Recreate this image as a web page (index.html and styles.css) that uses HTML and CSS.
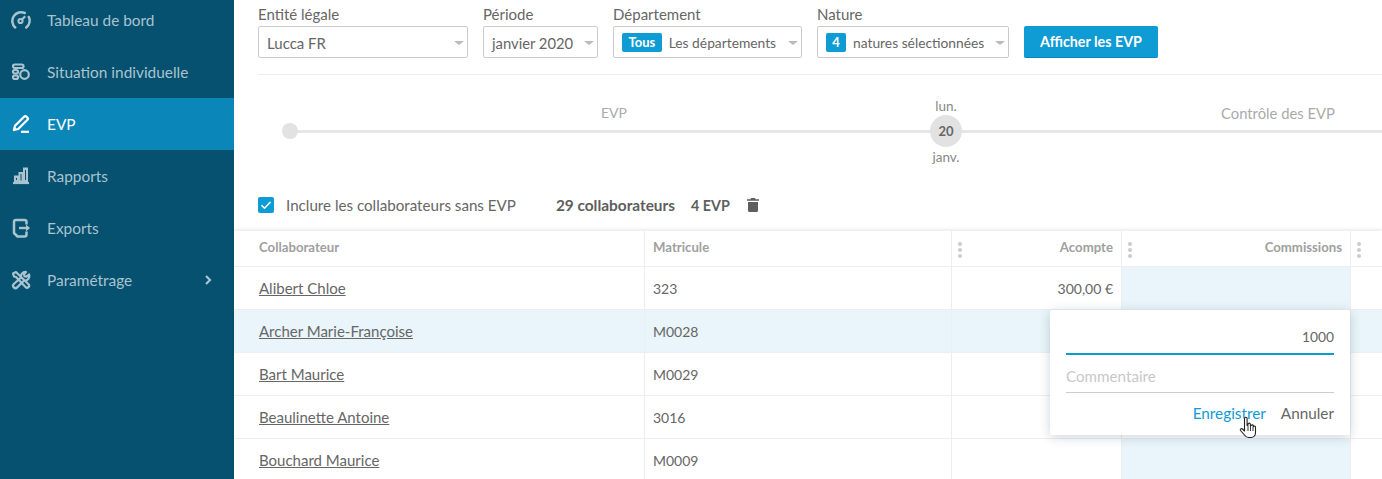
FILE: index.html
```html
<!DOCTYPE html>
<html lang="fr">
<head>
<meta charset="utf-8">
<title>EVP</title>
<link rel="stylesheet" href="styles.css">
</head>
<body>
<div class="app">
  <nav class="sidebar">
    <a class="nav-item"><svg class="nav-icon" viewBox="0 0 20 20"><path d="M4.200 17.500a8.800 8.800 0 0 1 9.600-14.500M17.800 7a8.800 8.800 0 0 1-2.500 10.500" fill="none" stroke="currentColor" stroke-width="2.500" stroke-linecap="round"/><circle cx="9.500" cy="11" r="2.100" fill="none" stroke="currentColor" stroke-width="2"/><path d="M11 9.500l3.200-3.200" stroke="currentColor" stroke-width="2.200"/></svg><span>Tableau de bord</span></a>
    <a class="nav-item"><svg class="nav-icon" viewBox="0 0 20 20"><g fill="none" stroke="currentColor" stroke-width="2.200"><rect x="2" y="2.500" width="10.500" height="3.500" rx="1.750"/><rect x="2" y="8" width="5" height="3.500" rx="1.750"/><rect x="2" y="13.500" width="5" height="3.500" rx="1.750"/><circle cx="13.500" cy="12.500" r="4.300"/></g></svg><span>Situation individuelle</span></a>
    <a class="nav-item active"><svg class="nav-icon" viewBox="0 0 20 20"><path d="M3 16l1-4.200L13.300 2.500a1.400 1.400 0 0 1 2 0l1.200 1.200a1.400 1.400 0 0 1 0 2L7.200 15z" fill="none" stroke="currentColor" stroke-width="2.300" stroke-linejoin="round"/><path d="M10 17.800h8" stroke="currentColor" stroke-width="2.200"/></svg><span>EVP</span></a>
    <a class="nav-item"><svg class="nav-icon" viewBox="0 0 20 20"><path d="M2 17h16" stroke="currentColor" stroke-width="2.200"/><g fill="none" stroke="currentColor" stroke-width="2"><rect x="4" y="10.500" width="3" height="5"/><rect x="8.500" y="7" width="3" height="8.500"/><rect x="13" y="2.500" width="3" height="13"/></g></svg><span>Rapports</span></a>
    <a class="nav-item"><svg class="nav-icon" viewBox="0 0 20 20"><path d="M15.500 6.500V4a2 2 0 0 0-2-2H5a2 2 0 0 0-2 2v11l3.500 3.500h7a2 2 0 0 0 2-2v-3" fill="none" stroke="currentColor" stroke-width="2.500" stroke-linejoin="round"/><path d="M8 10h9" stroke="currentColor" stroke-width="2.400"/><path d="M15 6.500l4 3.500-4 3.500z" fill="currentColor"/></svg><span>Exports</span></a>
    <a class="nav-item"><svg class="nav-icon" viewBox="0 0 20 20"><path d="M5 2l-3 1.500 1 3 2 .5 9.500 10a2 2 0 0 0 3-2.800L7 4zM18 4.500l-2.500 2.200-2-.5-.5-2L15 2a4.500 4.500 0 0 0-5 5.500L2.800 14a2.400 2.400 0 0 0 3.400 3.400L13 10.500a4.500 4.500 0 0 0 5-6z" fill="none" stroke="currentColor" stroke-width="2.200" stroke-linejoin="round"/></svg><span class="nav-label">Paramétrage</span><svg class="nav-chevron" viewBox="0 0 8 10"><path d="M2 1l4 4-4 4" fill="none" stroke="currentColor" stroke-width="2.200"/></svg></a>
  </nav>
  <main class="main">
    <form class="filters">
      <div class="field">
        <label class="field-label">Entité légale</label>
        <div class="select select-entity"><span class="select-text">Lucca FR</span><i class="caret"></i></div>
      </div>
      <div class="field">
        <label class="field-label">Période</label>
        <div class="select select-period"><span class="select-text select-date">janvier 2020</span><i class="caret"></i></div>
      </div>
      <div class="field">
        <label class="field-label">Département</label>
        <div class="select select-dept"><span class="tag">Tous</span><span class="select-small">Les départements</span><i class="caret"></i></div>
      </div>
      <div class="field">
        <label class="field-label">Nature</label>
        <div class="select select-nature"><span class="tag tag-num">4</span><span class="select-small">natures sélectionnées</span><i class="caret"></i></div>
      </div>
      <button class="btn" type="button">Afficher les EVP</button>
    </form>
    <section class="timeline">
      <div class="track">
        <span class="track-start"></span>
        <div class="phase phase-evp">EVP</div>
        <div class="milestone"><span class="ms-text">lun.</span><span class="ms-day">20</span><span class="ms-text">janv.</span></div>
        <div class="phase phase-ctrl">Contrôle des EVP</div>
      </div>
    </section>
    <div class="toolbar">
      <span class="checkbox"><svg viewBox="0 0 16 16"><path d="M3.500 8.200l3 3 6-6.200" fill="none" stroke="#fff" stroke-width="1.600"/></svg></span>
      <span class="check-label">Inclure les collaborateurs sans EVP</span>
      <strong class="count count-people">29 collaborateurs</strong>
      <strong class="count">4 EVP</strong>
      <svg class="trash" viewBox="0 0 12 14"><path d="M4 0h4l.6 1.200H12v1.600H0V1.200h3.400zM1 4h10v8.500A1.500 1.500 0 0 1 9.500 14h-7A1.500 1.500 0 0 1 1 12.500z" fill="#5e5e5e"/></svg>
    </div>
    <table class="grid">
      <colgroup><col class="c1"><col class="c2"><col class="c3"><col class="c4"><col class="c5"></colgroup>
      <thead>
        <tr>
          <th class="first">Collaborateur</th>
          <th>Matricule</th>
          <th class="num"><i class="dots"></i>Acompte</th>
          <th class="num"><i class="dots"></i>Commissions</th>
          <th><i class="dots"></i></th>
        </tr>
      </thead>
      <tbody>
        <tr><td class="first"><a class="person">Alibert Chloe</a></td><td class="code">323</td><td class="num code">300,00 €</td><td class="hl"></td><td></td></tr>
        <tr class="row-hl"><td class="first"><a class="person">Archer Marie-Françoise</a></td><td class="code">M0028</td><td></td><td></td><td></td></tr>
        <tr><td class="first"><a class="person">Bart Maurice</a></td><td class="code">M0029</td><td></td><td></td><td></td></tr>
        <tr><td class="first"><a class="person">Beaulinette Antoine</a></td><td class="code">3016</td><td></td><td></td><td></td></tr>
        <tr><td class="first"><a class="person">Bouchard Maurice</a></td><td class="code">M0009</td><td></td><td class="hl"></td><td></td></tr>
      </tbody>
    </table>
    <div class="popover">
      <div class="pop-input pop-value">1000</div>
      <div class="pop-input pop-comment">Commentaire</div>
      <div class="pop-actions"><a class="pop-save">Enregistrer</a><a class="pop-cancel">Annuler</a></div>
    </div>
    <svg class="cursor" viewBox="0 0 18 24"><path d="M5.500 2.500a1.300 1.300 0 0 1 2.600 0v7l.9-.3v-1a1.200 1.200 0 0 1 2.400.2v1.100l.9 0a1.100 1.100 0 0 1 2.100.5l0 .7a1.100 1.100 0 0 1 2.100.5v5.300c0 2.500-1.500 5-4.500 5H9.500c-2 0-3-1-4-2.500L1.500 14.500c-.8-1.200.8-2.500 2-1.500l2 2z" fill="#fff" stroke="#222" stroke-width="1.100" stroke-linejoin="round"/><path d="M9 10v5M11.500 10v5M14 10.500V15" stroke="#222" stroke-width=".9"/></svg>
  </main>
</div>
</body>
</html>
```
FILE: styles.css
```css
* { box-sizing: border-box; }
html, body { margin: 0; height: 479px; overflow: hidden; background: #fff; }
body { font-family: "Lato", "Open Sans", sans-serif; font-size: 15px; color: #666; }
.app { display: flex; height: 479px; overflow: hidden; }

.sidebar { flex: 0 0 234px; background: #05516f; color: #a9c3cf; font-size: 15.400px; }
.nav-item { display: flex; align-items: center; height: 52px; padding-left: 11px; }
.nav-item:first-child { height: 46px; }
.nav-item:first-child .nav-icon, .nav-item:first-child span { position: relative; top: -3px; }
.nav-item.active { background: #0b86b8; color: #fff; }
.nav-icon { width: 20px; height: 20px; margin-right: 16px; flex: none; }
.nav-label { flex: 1; }
.nav-chevron { width: 8px; height: 10px; margin-right: 22px; }

.main { flex: 1; min-width: 0; position: relative; }

.filters { display: flex; align-items: flex-end; gap: 15px; margin-left: 24px; height: 75px; padding-bottom: 16px; border-bottom: 1px solid #eee; }
.field { display: flex; flex-direction: column; }
.field-label { font-size: 15px; line-height: 18px; margin-bottom: 3px; color: #666; }
.select { display: flex; align-items: center; height: 32px; border: 1px solid #ccc; border-radius: 2px; position: relative; background: #fff; padding-left: 8px; }
.select-entity { width: 210px; }
.select-period { width: 115px; }
.select-dept { width: 189px; }
.select-nature { width: 192px; }
.select-text { font-size: 15px; padding-top: 2px; }
.select-date { font-size: 14.800px; }
.select-small { font-size: 13.800px; margin-left: 7px; }
.caret { position: absolute; right: 3px; top: 14px; width: 0; height: 0; border: 5px solid transparent; border-top: 4px solid #bbb; border-bottom: 0; }
.tag { background: #0f9bd4; color: #fff; font-size: 13px; font-weight: 700; line-height: 19px; height: 19px; border-radius: 2px; padding: 0 6.500px; }
.tag-num { width: 20px; padding: 0; text-align: center; }
.btn { height: 32px; width: 134px; border: 0; border-bottom: 1px solid #0c86b9; border-radius: 2px; background: #0f9bd4; color: #fff; font: 700 14.300px "Lato", sans-serif; }

.timeline { height: 105px; padding-left: 48px; overflow: hidden; }
.track { position: relative; height: 105px; width: 1200px; }
.track::before { content: ""; position: absolute; left: 8px; right: 0; top: 55px; height: 3px; background: #e6e6e6; }
.track-start { position: absolute; left: 0; top: 48px; width: 16px; height: 16px; border-radius: 50%; background: #e2e2e2; }
.phase { position: absolute; top: 29px; font-size: 14.800px; line-height: 18px; color: #aaa; }
.phase-evp { left: 319px; font-size: 14px; }
.phase-ctrl { left: 939px; }
.milestone { position: absolute; left: 648px; top: 22px; width: 32px; display: flex; flex-direction: column; align-items: center; }
.ms-text { font-size: 13.500px; line-height: 18px; color: #888; white-space: nowrap; }
.ms-day { width: 32px; height: 32px; border-radius: 50%; background: #e2e2e2; text-align: center; line-height: 32px; font-size: 13px; font-weight: 700; color: #666; margin: 0 0 1px; }

.toolbar { display: flex; align-items: center; height: 51px; padding-left: 24px; padding-bottom: 1px; }
.checkbox { width: 16px; height: 16px; background: #0f9bd4; border-radius: 2px; margin-right: 12px; display: flex; }
.check-label { font-size: 15.150px; margin-right: 40px; }
.count { font-size: 14.300px; font-weight: 700; color: #5e5e5e; }
.count-people { font-size: 15.400px; margin-right: 16px; }
.trash { width: 12px; height: 14px; margin-left: 17px; }

.grid { table-layout: fixed; border-collapse: separate; border-spacing: 0; width: 1148px; box-shadow: 0 -2px 3px rgba(0,0,0,.08); }
.c1 { width: 411px; } .c2 { width: 307px; } .c3 { width: 170px; } .c4 { width: 229px; } .c5 { width: 31px; }
.grid th, .grid td { border-bottom: 1px solid #eee; border-right: 1px solid #eee; padding: 0 8px; text-align: left; position: relative; }
.grid th:last-child, .grid td:last-child { border-right: 0; }
.grid th { height: 36px; font-size: 13.200px; font-weight: 700; color: #a0a0a0; padding-bottom: 3px; }
.grid td { height: 43px; font-size: 15px; }
.grid td.code { font-size: 14px; }
.grid .first { padding-left: 25px; }
.grid .num { text-align: right; }
.grid .hl, .row-hl td { background: #e9f5fa; }
.person { text-decoration: underline; color: #666; }
.dots { position: absolute; left: 6px; top: 11px; width: 4px; height: 4px; border-radius: 50%; background: #ccc; box-shadow: 0 6px 0 #ccc, 0 12px 0 #ccc; }

.popover { position: absolute; left: 816px; top: 310px; width: 300px; height: 125px; background: #fff; border-radius: 2px; box-shadow: 0 2px 12px rgba(0,40,70,.2); padding: 0 16px; }
.pop-value { height: 45px; line-height: 54px; text-align: right; border-bottom: 2px solid #0f9bd4; font-size: 13.800px; }
.pop-comment { height: 38px; line-height: 42px; border-bottom: 1px solid #ccc; color: #c8c8c8; font-size: 15.200px; }
.pop-actions { display: flex; justify-content: flex-end; gap: 15px; padding-top: 11px; font-size: 15.300px; line-height: 18px; }
.pop-save { color: #0f9bd4; }
.cursor { position: absolute; left: 1005px; top: 416px; width: 18px; height: 24px; }
```
